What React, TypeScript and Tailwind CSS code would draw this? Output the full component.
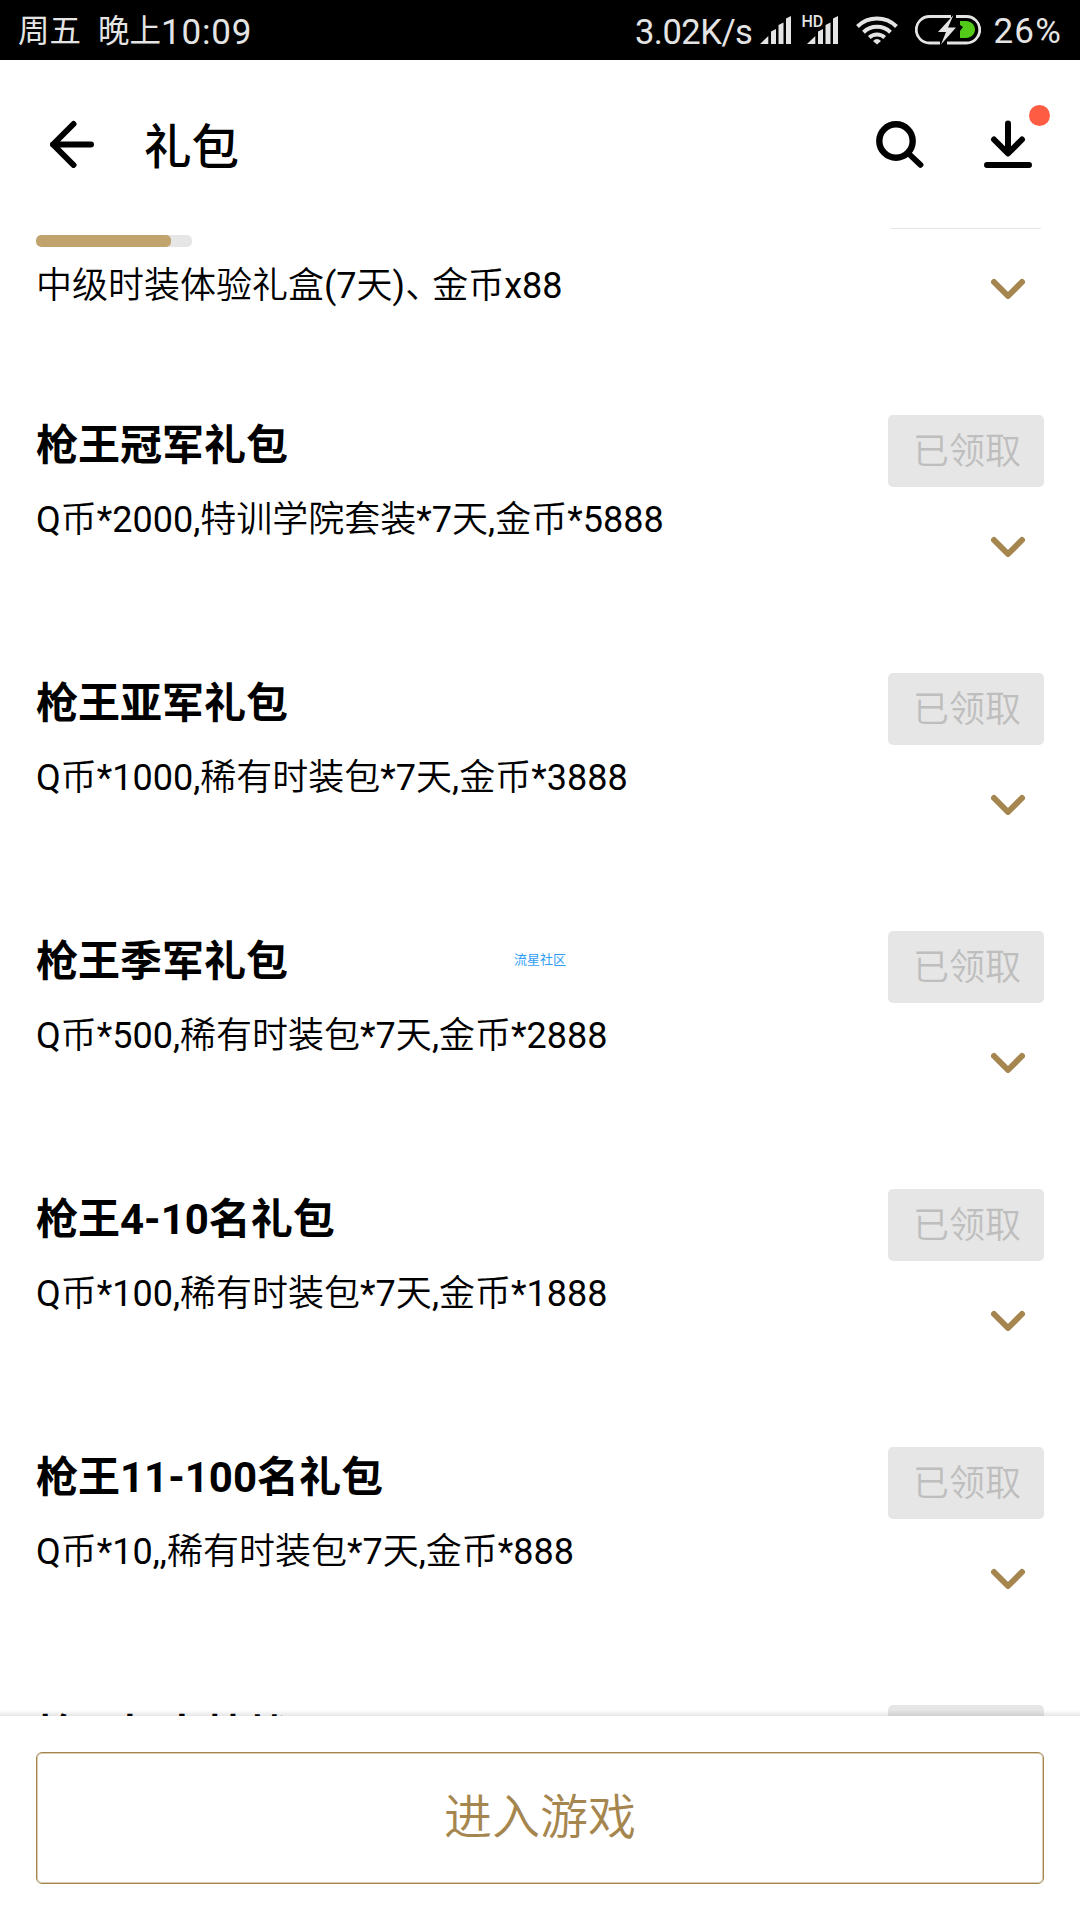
type Gift = {
  title: string;
  desc: string;
  progress?: number;
};

const gifts: Gift[] = [
  { title: "枪王体验礼包", desc: "中级时装体验礼盒(7天)、金币x88", progress: 86.5 },
  { title: "枪王冠军礼包", desc: "Q币*2000,特训学院套装*7天,金币*5888" },
  { title: "枪王亚军礼包", desc: "Q币*1000,稀有时装包*7天,金币*3888" },
  { title: "枪王季军礼包", desc: "Q币*500,稀有时装包*7天,金币*2888" },
  { title: "枪王4-10名礼包", desc: "Q币*100,稀有时装包*7天,金币*1888" },
  { title: "枪王11-100名礼包", desc: "Q币*10,,稀有时装包*7天,金币*888" },
  { title: "枪王打卡特战", desc: "" },
];

const SignalIcon = () => (
  <svg width="32" height="28" viewBox="0 0 32 28" fill="#e4e4e4">
    <path d="M0 28L8.3 20v8zM11 15.5l5-2.5v15h-5zM18.5 9l5-2.5V28h-5zM26 2.5L31 0v28h-5z" />
  </svg>
);

const WifiIcon = () => (
  <svg width="42" height="30" viewBox="0 0 42 30" fill="none" stroke="#e4e4e4" strokeWidth="4">
    <path d="M1.5 11.5a28 28 0 0 1 39 0" />
    <path d="M7.5 17.2a19.5 19.5 0 0 1 27 0" />
    <path d="M13.3 22.5a11.3 11.3 0 0 1 15.4 0" />
    <path d="M21 29.5l-4-3.6q4-3.6 8 0z" fill="#e4e4e4" stroke="none" />
  </svg>
);

const BatteryIcon = () => (
  <svg width="66" height="30" viewBox="0 0 66 30" fill="none">
    <path
      d="M36 1.5H14.5a13.2 13.2 0 0 0 0 26.5H25M41 1.5h10.5a13.2 13.2 0 0 1 0 26.5H32"
      stroke="#e4e4e4"
      strokeWidth="2.8"
    />
    <path d="M45 6h6c5 0 9 4 9 8.5S56 23 51 23h-6v-7l3-4-3-2z" fill="#53c91a" />
    <path d="M38.5 0L23 17h8L26 29.5 41 12.5h-8z" fill="#e4e4e4" />
  </svg>
);

const StatusBar = () => (
  <div className="flex h-[60px] shrink-0 items-center justify-between bg-black pr-[18px] pl-[18px] text-[35px] text-[#e4e4e4]">
    <div className="flex items-center leading-[60px] whitespace-pre">
      <span className="mt-[4px] text-[31.5px]">周五</span>
      <span className="mt-[4px] ml-[17px] text-[31.5px]">晚上</span>
      <span className="mt-[5px] tracking-[0.8px]">10:09</span>
    </div>
    <div className="flex items-center leading-[60px]">
      <span className="mt-[4px] text-[34.5px] tracking-[-0.5px]">3.02K/s</span>
      <div className="ml-[8px]">
        <SignalIcon />
      </div>
      <div className="relative ml-[15px]">
        <span className="absolute -top-[2px] -left-[6px] text-[16px] leading-[15px] font-medium">HD</span>
        <SignalIcon />
      </div>
      <div className="ml-[17px]">
        <WifiIcon />
      </div>
      <div className="ml-[17px]">
        <BatteryIcon />
      </div>
      <span className="mt-[3px] ml-[12px] tracking-[1.2px]">26%</span>
    </div>
  </div>
);

const Header = () => (
  <div className="flex h-[168px] shrink-0 items-center pr-[48px] pl-[50px]">
    <svg width="46" height="48" viewBox="0 0 46 48" fill="none" stroke="#000" strokeWidth="6" strokeLinecap="round" strokeLinejoin="round">
      <path d="M41 24.5H3M23.5 4L3 24.5l20.5 20.5" />
    </svg>
    <h1 className="mt-[8px] ml-[48px] text-[47.5px] leading-[60px] font-medium">礼包</h1>
    <svg className="ml-auto" width="50" height="48" viewBox="0 0 50 48" fill="none" stroke="#000" strokeLinecap="round">
      <circle cx="21" cy="21" r="16.7" strokeWidth="6.4" />
      <path d="M34 34l11.5 10.8" strokeWidth="5.8" />
    </svg>
    <div className="relative ml-[59px]">
      <svg width="48" height="48" viewBox="0 0 48 48" fill="none" stroke="#000" strokeWidth="6" strokeLinecap="round" strokeLinejoin="round">
        <path d="M24 3.5v29M10 19.5l14 14 14-14M3 45h42" />
      </svg>
      <span className="absolute -top-[15px] -right-[18px] size-[21px] rounded-full bg-[#ff5c44]" />
    </div>
  </div>
);

// Los caracteres chinos van más finos que las cifras
const Description = ({ text }: { text: string }) => (
  <>
    {text.split(/([\u4e00-\u9fff]+|、)/).map((part, i) => {
      if (part === "、") return <span key={i} className="font-[350] tracking-[-9px]">{part}</span>;
      if (i % 2 === 1) return <span key={i} className="font-[350]">{part}</span>;
      return part;
    })}
  </>
);

const GiftRow = ({ title, desc, progress }: Gift) => (
  <div className="flex h-[258px] shrink-0 justify-between px-9">
    <div className="flex flex-col">
      <h2 className="mt-[1px] text-[42px] leading-[60px] font-bold whitespace-nowrap">{title}</h2>
      {progress !== undefined && (
        <div className="mt-[17px] h-3 w-[156px] overflow-hidden rounded-[5px] bg-[#e6e6e6]">
          <div className="h-full rounded-[5px] bg-[#c1a36d]" style={{ width: `${progress}%` }} />
        </div>
      )}
      <p className={`text-[36px] leading-[60px] font-normal whitespace-nowrap ${progress !== undefined ? "mt-[9px]" : "mt-[14px]"}`}>
        <Description text={desc} />
      </p>
    </div>
    <div className="flex w-[156px] flex-col items-end">
      <button className="h-[72px] w-full rounded-[5px] bg-[#e6e6e6] pt-[1px] pl-[2px] text-[36px] leading-[72px] font-[350] text-[#bebebe]">已领取</button>
      <svg className="mt-[48px] mr-[19px]" width="34" height="22" viewBox="0 0 34 22" fill="none" stroke="#a6864f" strokeWidth="6" strokeLinecap="round" strokeLinejoin="round">
        <path d="M3 5l14 14L31 5" />
      </svg>
    </div>
  </div>
);

const App = () => {
  return (
    <div className="relative flex h-[1920px] w-[1080px] flex-col overflow-hidden bg-white font-[Roboto,'Noto_Sans_CJK_SC',sans-serif] text-black">
      <StatusBar />
      <Header />
      {/* Lista desplazada bajo la cabecera */}
      <div className="h-[1488px] shrink-0 overflow-hidden">
        <div className="-mt-[71px] flex flex-col">
          {gifts.map((gift) => (
            <GiftRow key={gift.title} {...gift} />
          ))}
        </div>
      </div>
      <div className="relative h-[204px] shrink-0 bg-white px-9 py-9">
        <div className="absolute inset-x-0 -top-[6px] h-[6px] bg-linear-to-t from-black/10 to-transparent" />
        <button className="h-[132px] w-full rounded-[6px] border border-[#a6864f] text-[48px] leading-[128px] font-[350] text-[#a6864f] shadow-[inset_0_0_0_1px_#d9ccb5]">
          进入游戏
        </button>
      </div>
      <span className="absolute top-[951px] left-[514px] text-[13px] leading-[18px] text-[#2f9df4]">流星社区</span>
    </div>
  );
};

export default App;
